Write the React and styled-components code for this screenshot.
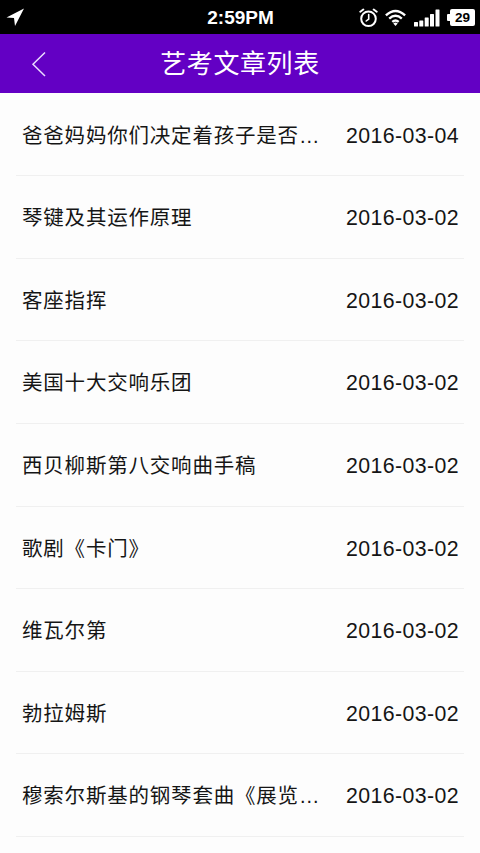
import React from 'react'
import styled, {createGlobalStyle} from 'styled-components'


const articles = [
  {title: '爸爸妈妈你们决定着孩子是否…', date: '2016-03-04'},
  {title: '琴键及其运作原理', date: '2016-03-02'},
  {title: '客座指挥', date: '2016-03-02'},
  {title: '美国十大交响乐团', date: '2016-03-02'},
  {title: '西贝柳斯第八交响曲手稿', date: '2016-03-02'},
  {title: '歌剧《卡门》', date: '2016-03-02'},
  {title: '维瓦尔第', date: '2016-03-02'},
  {title: '勃拉姆斯', date: '2016-03-02'},
  {title: '穆索尔斯基的钢琴套曲《展览…', date: '2016-03-02'},
]

const GlobalStyle = createGlobalStyle`
  * {
    box-sizing: border-box;
  }

  body {
    margin: 0;
    background: #fdfdfd;
    font-family: "Liberation Sans", "Noto Sans CJK SC", sans-serif;
  }
`

const Page = styled.div`
  height: 853px;
  overflow: hidden;
`

const StatusBar = styled.div`
  display: grid;
  grid-template-columns: 1fr auto 1fr;
  align-items: center;
  height: 34px;
  padding: 1px 5px 0 6px;
  background: #000;
  color: #fff;
`

const Clock = styled.span`
  font-size: 19px;
  font-weight: bold;
  letter-spacing: 0;
  line-height: 20px;
`

const StatusIcons = styled.div`
  display: flex;
  align-items: center;
  justify-content: flex-end;
`

const Icon = styled.svg`
  display: block;
  flex: none;
  margin-left: ${props => props.$gap || 0}px;
`

const Battery = styled.div`
  display: flex;
  align-items: center;
  margin-left: 7px;

  &::before {
    content: "";
    width: 3px;
    height: 7px;
    border-radius: 1px 0 0 1px;
    background: #fff;
  }
`

const BatteryLevel = styled.span`
  width: 25px;
  height: 17px;
  border-radius: 2px;
  background: #fff;
  color: #000;
  font-size: 13.5px;
  font-weight: bold;
  line-height: 18px;
  text-align: center;
`

const NavBar = styled.header`
  display: grid;
  grid-template-columns: 80px 1fr 80px;
  align-items: center;
  height: 59px;
  background: #6300c4;
  color: #fff;
`

const BackButton = styled.button`
  display: flex;
  align-items: center;
  height: 59px;
  padding: 0 0 0 31px;
  border: none;
  background: none;
  color: inherit;
`

const NavTitle = styled.h1`
  margin: 0;
  padding-top: 1px;
  font-size: 26px;
  font-weight: 400;
  letter-spacing: 0.6px;
  line-height: 36px;
  text-align: center;
`

const List = styled.ul`
  margin: 0;
  padding: 0.6px 16px 0;
  list-style: none;
`

const Row = styled.li`
  display: flex;
  align-items: center;
  justify-content: space-between;
  height: 82.6px;
  padding: 2.4px 5px 0 6px;
  border-bottom: 1px solid #f0f0f0;
  color: #151515;
  line-height: 30px;
  white-space: nowrap;
`

const Title = styled.span`
  font-size: 20.5px;
  letter-spacing: 0.8px;
`

const DateLabel = styled.span`
  font-size: 21.3px;
  letter-spacing: 0.4px;
`

const ArticleRow = ({title, date}) => (
  <Row>
    <Title>{title}</Title>
    <DateLabel>{date}</DateLabel>
  </Row>
)

export default function App(){
  return(
    <Page>
      <GlobalStyle/>
      <StatusBar>
        <Icon width="19" height="19" viewBox="0 0 19 19">
          <path d="M18 0.5 L9 18 L8 10 L0.5 9.5 Z" fill="#fff"/>
        </Icon>
        <Clock>2:59PM</Clock>
        <StatusIcons>
          <Icon width="19" height="20" viewBox="0 0 19 20" fill="none" stroke="#fff" strokeLinecap="round">
            <circle cx="9.5" cy="10.8" r="7.3" strokeWidth="2"/>
            <path d="M9.7 6.5 V11 L7.2 13" strokeWidth="1.6"/>
            <path d="M1.3 3.7 L4.3 1.5 M14.7 1.5 L17.7 3.7" strokeWidth="2"/>
          </Icon>
          <Icon $gap={7} width="21" height="18" viewBox="0 0 21 18" fill="none" stroke="#fff" strokeWidth="2.4">
            <path d="M0.9 6.3 Q10.5 -2.5 20.1 6.3"/>
            <path d="M4.2 9.6 Q10.5 4 16.8 9.6"/>
            <path d="M7.3 12.8 Q10.5 10 13.7 12.8"/>
            <path d="M8.3 14.4 Q10.5 12.8 12.7 14.4 L10.5 17 Z" fill="#fff" stroke="none"/>
          </Icon>
          <Icon $gap={8} width="26" height="18" viewBox="0 0 26 18" fill="#fff">
            <rect x="0" y="13" width="4" height="4.5" rx="0.5"/>
            <rect x="5.3" y="11.5" width="4" height="6" rx="0.5"/>
            <rect x="10.7" y="8.5" width="4" height="9" rx="0.5"/>
            <rect x="16" y="5" width="4" height="12.5" rx="0.5"/>
            <rect x="21.5" y="0.5" width="4" height="17" rx="0.5"/>
          </Icon>
          <Battery><BatteryLevel>29</BatteryLevel></Battery>
        </StatusIcons>
      </StatusBar>
      <NavBar>
        <BackButton aria-label="返回">
          <Icon width="16" height="26" viewBox="0 0 16 26" fill="none" stroke="#eadcff" strokeWidth="1.5">
            <path d="M14 1.5 L2 13.2 L14 25"/>
          </Icon>
        </BackButton>
        <NavTitle>艺考文章列表</NavTitle>
      </NavBar>
      <List>
        {articles.map((a,i) => <ArticleRow key={i} {...a}/>)}
      </List>
    </Page>
  )
}
